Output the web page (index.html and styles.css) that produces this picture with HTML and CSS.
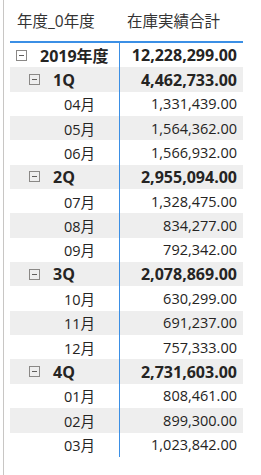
FILE: index.html
```html
<!DOCTYPE html>
<html lang="ja">
<head>
<meta charset="utf-8">
<link rel="stylesheet" href="styles.css">
</head>
<body>
<div class="frame">
  <div class="matrix">
    <div class="head">
      <div class="hc c1">年度_0年度</div>
      <div class="hc c2">在庫実績合計</div>
    </div>
    <div class="body">
      <div class="row l0"><div class="c1"><span class="tg"></span>2019年度</div><div class="c2">12,228,299.00</div></div>
      <div class="row l1 alt"><div class="c1"><span class="tg"></span>1Q</div><div class="c2">4,462,733.00</div></div>
      <div class="row l2"><div class="c1">04月</div><div class="c2">1,331,439.00</div></div>
      <div class="row l2 alt"><div class="c1">05月</div><div class="c2">1,564,362.00</div></div>
      <div class="row l2"><div class="c1">06月</div><div class="c2">1,566,932.00</div></div>
      <div class="row l1 alt"><div class="c1"><span class="tg"></span>2Q</div><div class="c2">2,955,094.00</div></div>
      <div class="row l2"><div class="c1">07月</div><div class="c2">1,328,475.00</div></div>
      <div class="row l2 alt"><div class="c1">08月</div><div class="c2">834,277.00</div></div>
      <div class="row l2"><div class="c1">09月</div><div class="c2">792,342.00</div></div>
      <div class="row l1 alt"><div class="c1"><span class="tg"></span>3Q</div><div class="c2">2,078,869.00</div></div>
      <div class="row l2"><div class="c1">10月</div><div class="c2">630,299.00</div></div>
      <div class="row l2 alt"><div class="c1">11月</div><div class="c2">691,237.00</div></div>
      <div class="row l2"><div class="c1">12月</div><div class="c2">757,333.00</div></div>
      <div class="row l1 alt"><div class="c1"><span class="tg"></span>4Q</div><div class="c2">2,731,603.00</div></div>
      <div class="row l2"><div class="c1">01月</div><div class="c2">808,461.00</div></div>
      <div class="row l2 alt"><div class="c1">02月</div><div class="c2">899,300.00</div></div>
      <div class="row l2"><div class="c1">03月</div><div class="c2">1,023,842.00</div></div>
    </div>
  </div>
</div>
</body>
</html>
```
FILE: styles.css
```css
html, body {
  margin: 0;
  padding: 0;
  background: #fff;
}
body {
  font-family: "Open Sans", "Noto Sans CJK JP", sans-serif;
  color: #252423;
}
.frame {
  margin-left: 3px;
  border-left: 1px solid #c8c6c4;
  height: 475px;
  padding-left: 6px;
  box-sizing: border-box;
}
.matrix {
  width: 233px;
}
.head {
  display: flex;
  height: 41px;
  align-items: center;
  border-bottom: 2px solid #3b8fe5;
  font-size: 15.5px;
  color: #333;
}
.c1 {
  width: 109px;
  box-sizing: border-box;
  flex: none;
}
.c2 {
  flex: 1;
  box-sizing: border-box;
  border-left: 1px solid #3b8fe5;
  text-align: right;
  padding-right: 6px;
}
.head .c1 { padding-left: 7px; }
.head .c2 { border-left: none; text-align: left; padding-left: 8px; }
.row {
  display: flex;
  height: 24.35px;
  align-items: stretch;
  font-size: 14.5px;
}
.row > div {
  display: flex;
  align-items: center;
}
.row .c2 { justify-content: flex-end; }
.row.alt { background: #eeeeee; }
.l0, .l1 { font-weight: bold; }
.l0 .c1 { padding-left: 6px; font-size: 16px; }
.l1 .c1 { padding-left: 19px; font-size: 16px; }
.l2 .c1 { padding-left: 54px; }
.l0 .c2, .l1 .c2 { font-size: 16px; }
.tg {
  width: 9px;
  height: 9px;
  border: 1px solid #8a8886;
  position: relative;
  margin-right: 13px;
  flex: none;
}
.tg::after {
  content: "";
  position: absolute;
  left: 2px;
  right: 2px;
  top: 4px;
  height: 1px;
  background: #605e5c;
}
```
